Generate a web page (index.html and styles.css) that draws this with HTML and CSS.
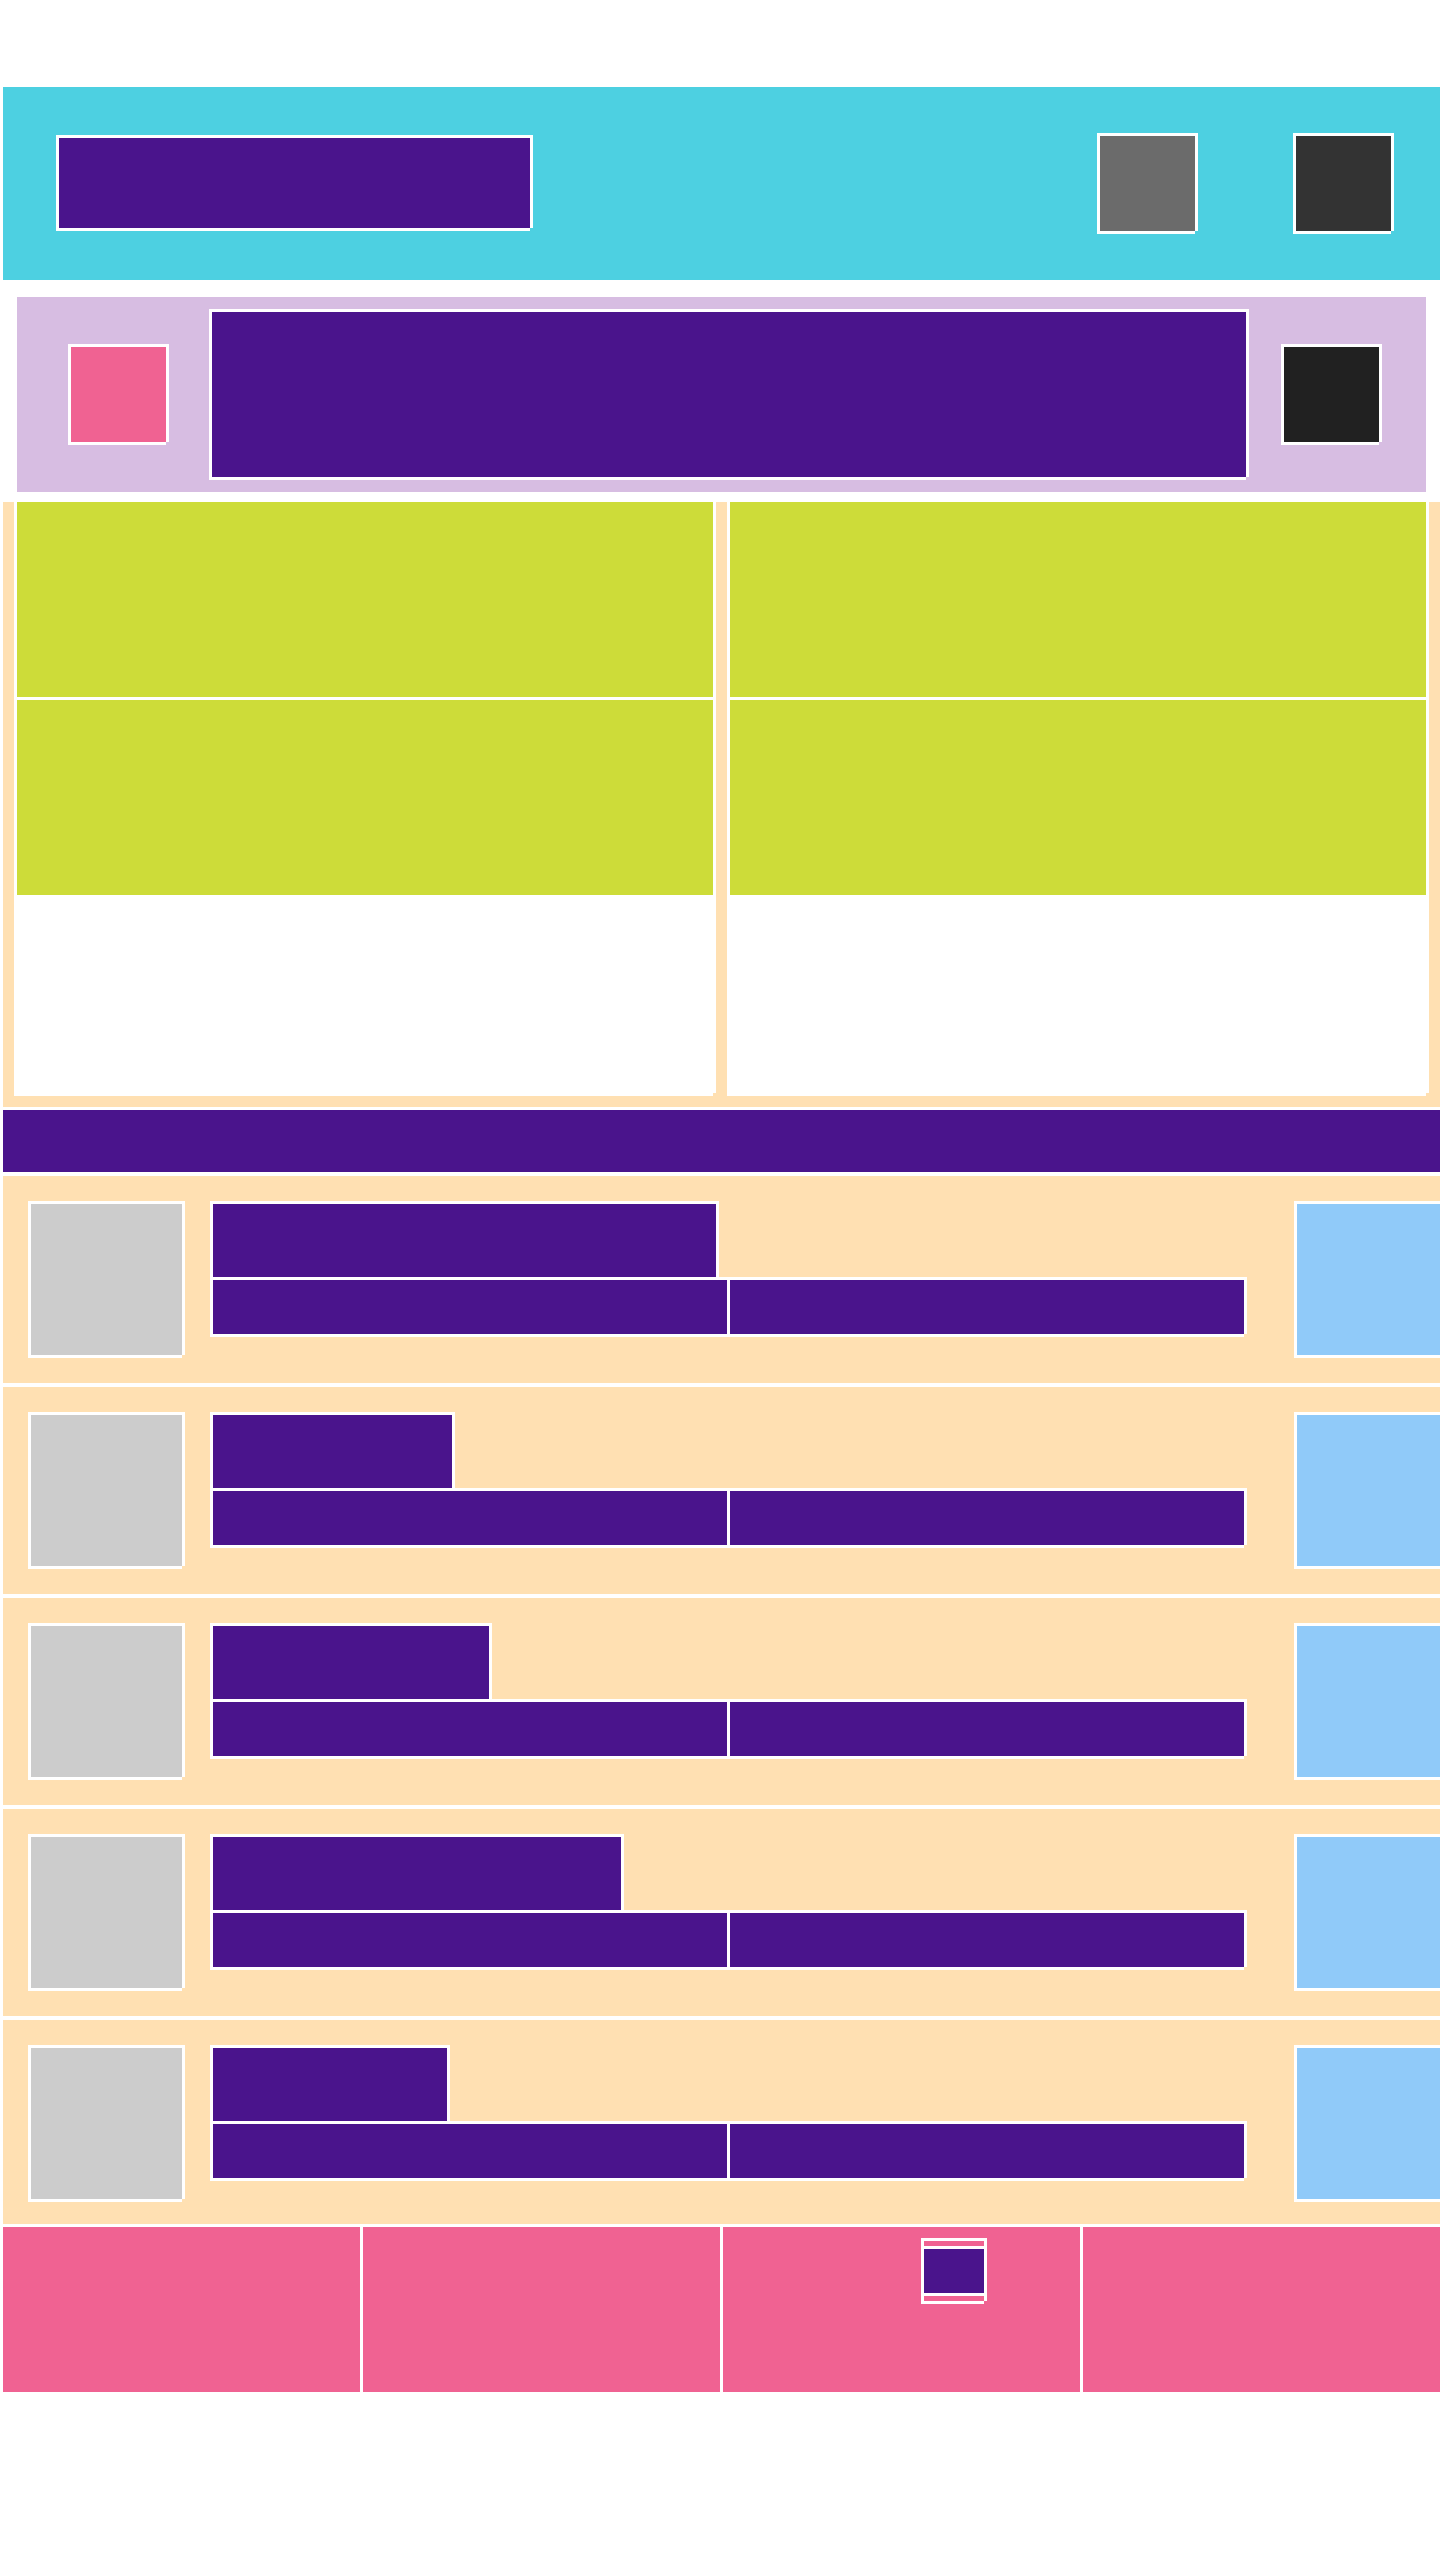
FILE: index.html
```html
<!DOCTYPE html>
<html lang="en">
<head>
    <meta charset="UTF-8">
    <meta name="viewport" content="width=device-width, initial-scale=1.0">
    <title>Layout</title>
    <link rel="stylesheet" href="styles.css">
</head>
<body>

<div class="page">

    <div class="topbar">
        <div class="box topbar-title"></div>
        <div class="box topbar-btn btn-grey"></div>
        <div class="box topbar-btn btn-dark"></div>
    </div>

    <div class="hero">
        <div class="box hero-icon"></div>
        <div class="box hero-banner"></div>
        <div class="box hero-action"></div>
    </div>

    <div class="tiles">
        <div class="tile">
            <div class="tile-block"></div>
            <div class="tile-block"></div>
        </div>
        <div class="tile">
            <div class="tile-block"></div>
            <div class="tile-block"></div>
        </div>
    </div>

    <div class="section-bar"></div>

    <div class="list">
        <div class="list-row">
            <div class="box row-thumb"></div>
            <div class="row-text">
                <div class="box row-title" style="width: 506px"></div>
                <div class="row-meta">
                    <div class="row-meta-cell"></div>
                    <div class="row-meta-cell"></div>
                </div>
            </div>
            <div class="box row-side"></div>
        </div>
        <div class="list-row">
            <div class="box row-thumb"></div>
            <div class="row-text">
                <div class="box row-title" style="width: 242px"></div>
                <div class="row-meta">
                    <div class="row-meta-cell"></div>
                    <div class="row-meta-cell"></div>
                </div>
            </div>
            <div class="box row-side"></div>
        </div>
        <div class="list-row">
            <div class="box row-thumb"></div>
            <div class="row-text">
                <div class="box row-title" style="width: 279px"></div>
                <div class="row-meta">
                    <div class="row-meta-cell"></div>
                    <div class="row-meta-cell"></div>
                </div>
            </div>
            <div class="box row-side"></div>
        </div>
        <div class="list-row">
            <div class="box row-thumb"></div>
            <div class="row-text">
                <div class="box row-title" style="width: 411px"></div>
                <div class="row-meta">
                    <div class="row-meta-cell"></div>
                    <div class="row-meta-cell"></div>
                </div>
            </div>
            <div class="box row-side"></div>
        </div>
        <div class="list-row last">
            <div class="box row-thumb"></div>
            <div class="row-text">
                <div class="box row-title" style="width: 237px"></div>
                <div class="row-meta">
                    <div class="row-meta-cell"></div>
                    <div class="row-meta-cell"></div>
                </div>
            </div>
            <div class="box row-side"></div>
        </div>
    </div>

    <div class="tabbar">
        <div class="tab"></div>
        <div class="tab"></div>
        <div class="tab">
            <div class="box tab-icon">
                <div class="tab-icon-bar"></div>
            </div>
        </div>
        <div class="tab"></div>
    </div>

</div>

</body>
</html>
```

FILE: styles.css
```css
* {
    box-sizing: border-box;
}
body {
    font-family: "Liberation Sans", Arial, sans-serif;
    background-color: #fff;
    margin: 0;
    padding: 0;
}
.page {
    width: 1440px;
    padding: 87px 0 0 3px;
}

/* white frame shared by the blocks */
.box {
    border-top: 3px solid #fff;
    border-left: 3px solid #fff;
    box-shadow: 3px 0 0 #fff, 0 3px 0 #fff;
}

/* top bar */
.topbar {
    display: flex;
    align-items: flex-start;
    height: 193px;
    padding: 46px 49px 0 53px;
    background: #4dd0e1;
}
.topbar-title {
    width: 474px;
    height: 93px;
    margin-top: 2px;
    background: #4a148c;
}
.topbar-btn {
    width: 98px;
    height: 98px;
}
.btn-grey {
    margin-left: auto;
    background: #6b6b6b;
}
.btn-dark {
    margin-left: 98px;
    background: #333;
}

/* hero */
.hero {
    display: flex;
    align-items: flex-start;
    height: 195px;
    margin: 17px 14px 0 14px;
    padding: 12px 47px 0 51px;
    background: #d7bde2;
}
.hero-icon {
    width: 98px;
    height: 98px;
    margin-top: 35px;
    background: #f06292;
}
.hero-banner {
    width: 1037px;
    height: 168px;
    margin-left: 43px;
    background: #4a148c;
}
.hero-action {
    width: 98px;
    height: 98px;
    margin-top: 35px;
    margin-left: 35px;
    background: #212121;
}

/* tiles */
.tiles {
    display: grid;
    grid-template-columns: 699px 699px;
    gap: 14px;
    margin-top: 10px;
    padding: 0 14px 14px 11px;
    background: #ffe0b2;
}
.tile {
    display: flex;
    flex-direction: column;
    gap: 3px;
    height: 591px;
    background: #fff;
    border-left: 3px solid #fff;
    box-shadow: 3px 0 0 #fff, 0 3px 0 #fff;
}
.tile-block {
    height: 195px;
    background: #cddc39;
}

.section-bar {
    height: 62px;
    margin-top: 3px;
    background: #4a148c;
}

/* list */
.list-row {
    display: flex;
    align-items: flex-start;
    height: 207px;
    margin-top: 4px;
    padding: 25px 0 0 25px;
    background: #ffe0b2;
    overflow: hidden;
}
.list-row.last {
    height: 204px;
}
.row-thumb {
    flex-shrink: 0;
    width: 154px;
    height: 154px;
    background: #ccc;
}
.row-text {
    display: flex;
    flex-direction: column;
    flex-shrink: 0;
    width: 1034px;
    margin-left: 28px;
}
.row-title {
    height: 76px;
    background: #4a148c;
}
.row-meta {
    display: flex;
    height: 57px;
    box-shadow: 3px 0 0 #fff, 0 3px 0 #fff;
}
.row-meta-cell {
    width: 517px;
    border-top: 3px solid #fff;
    border-left: 3px solid #fff;
    background: #4a148c;
}
.row-side {
    flex-shrink: 0;
    width: 154px;
    height: 154px;
    margin-left: 50px;
    background: #90caf9;
}

/* tab bar */
.tabbar {
    display: grid;
    grid-template-columns: repeat(4, 357px);
    gap: 3px;
    height: 165px;
    margin-top: 3px;
}
.tab {
    background: #f06292;
}
.tab:nth-child(3) {
    padding: 11px 0 0 198px;
}
.tab-icon {
    width: 63px;
    height: 63px;
    padding-top: 5px;
    background: #f06292;
}
.tab-icon-bar {
    height: 47px;
    border-top: 3px solid #fff;
    background: #4a148c;
    box-shadow: 0 3px 0 #fff;
}
```
